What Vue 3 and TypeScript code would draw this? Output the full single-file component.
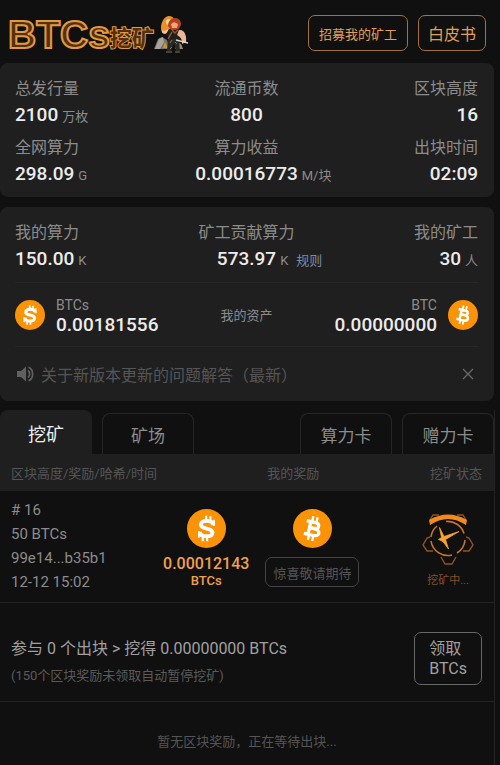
<script setup lang="ts">
import { ref } from 'vue'

interface Stat {
  label: string
  value: string
  unit?: string
  link?: string
}

const network: Stat[] = [
  { label: '总发行量', value: '2100', unit: '万枚' },
  { label: '流通币数', value: '800' },
  { label: '区块高度', value: '16' },
  { label: '全网算力', value: '298.09', unit: 'G' },
  { label: '算力收益', value: '0.00016773', unit: 'M/块' },
  { label: '出块时间', value: '02:09' },
]

const mine: Stat[] = [
  { label: '我的算力', value: '150.00', unit: 'K' },
  { label: '矿工贡献算力', value: '573.97', unit: 'K', link: '规则' },
  { label: '我的矿工', value: '30', unit: '人' },
]

const tabs: string[] = ['挖矿', '矿场', '算力卡', '赠力卡']
const active = ref(0)
const noticeOpen = ref(true)
</script>

<template>
  <svg class="defs" width="0" height="0" aria-hidden="true">
    <symbol id="coin-s" viewBox="0 0 40 40">
      <circle cx="20" cy="20" r="20" fill="#fb9309" />
      <g fill="none" stroke="#fff">
        <path d="M19.6 7v5M24 7.500v5M16.200 28v5M20.600 28v5" stroke-width="2.200" />
        <path d="M27 16.500c-.5-3-3-4.300-6.300-4.300-3.600 0-6.400 1.400-6.400 4 0 5.200 11.800 2.600 11.800 7.800 0 2.700-2.800 4-6.300 4-3.600 0-6.300-1.500-6.600-4.600" stroke-width="4" />
        <path d="M27.800 11v6.500M12.200 22.500v7" stroke-width="1.800" />
      </g>
    </symbol>
    <symbol id="coin-b" viewBox="0 0 40 40">
      <circle cx="20" cy="20" r="20" fill="#fb9309" />
      <g transform="rotate(13 20 20)" fill="none" stroke="#fff">
        <path d="M18 7.500v5M22.500 7.500v5M18 27.500v5M22.500 27.500v5" stroke-width="2.400" />
        <path d="M12.500 13.500h9c5.500 0 5.500 6 0 6h-4.500M17 19.800h5.500c6.500 0 6.500 7 0 7h-10M16.800 13v14" stroke-width="3.400" />
      </g>
    </symbol>
  </svg>

  <main class="page">
    <header class="top">
      <h1 class="logo">
        <span class="logo-en">BTCs</span><span class="logo-cn">挖矿</span>
        <svg class="miner" viewBox="0 0 36 40" aria-hidden="true">
          <path d="M0 34l4-10 4-2 5 3 3 9z" fill="#77746e" />
          <path d="M5 24l4-2 1 5-4 7H1z" fill="#a9a498" />
          <path d="M9 33l2-6 3 6z" fill="#c9962f" />
          <path d="M21 34l2-7 4 2 2 5z" fill="#a78c6c" />
          <path d="M7 13c0-7 4-12 8-12 5 0 6 4 4 8-2 5-6 8-9 8-2 0-3-2-3-4z" fill="#e8912a" />
          <path d="M8 14c0 3 4 2 6 0l1 3-4 2c-3 0-4-3-3-5z" fill="#f0c398" />
          <circle cx="15" cy="7" r="3" fill="#f8d79c" />
          <path d="M14 11c0-5 3-8 7-8s6 3 6 7l-3 5h-7z" fill="#b4431c" />
          <path d="M17 9l3-2 4 2-1 4h-5z" fill="#efa57c" />
          <path d="M15 14l-3 5 5 8 8-1 4-7-5-5-5 2z" fill="#20201d" />
          <path d="M18 15l3 3 3-3M14 24l4-7" fill="none" stroke="#8a5a32" stroke-width="1.500" />
          <path d="M25 15c5-1 8 5 7 12l-4 2c1-5-3-8-5-9z" fill="#eeb596" />
          <path d="M14 24h11l1 12h-4l-2-8-3 8h-4z" fill="#292a27" />
          <path d="M16 28l2-3M21 27l2 2M18 32l-2 2" stroke="#85764d" stroke-width="1" />
          <path d="M22 25l12 3" stroke="#d8d6cc" stroke-width="1.300" />
          <path d="M12 36h6v2h-6zM21 36h5v2h-5z" fill="#4a4039" />
        </svg>
      </h1>
      <nav class="actions">
        <button type="button" class="gold small">招募我的矿工</button>
        <button type="button" class="gold">白皮书</button>
      </nav>
    </header>

    <section class="card">
      <dl class="stats">
        <div v-for="s in network" :key="s.label" class="stat">
          <dt>{{ s.label }}</dt>
          <dd>{{ s.value }}<span v-if="s.unit" class="unit">{{ s.unit }}</span></dd>
        </div>
      </dl>
    </section>

    <section class="card second">
      <dl class="stats">
        <div v-for="s in mine" :key="s.label" class="stat">
          <dt>{{ s.label }}</dt>
          <dd>{{ s.value }}<span v-if="s.unit" class="unit">{{ s.unit }}<a v-if="s.link" href="#rules">{{ s.link }}</a></span></dd>
        </div>
      </dl>
      <div class="assets">
        <div class="asset">
          <svg class="coin"><use href="#coin-s" /></svg>
          <p><small>BTCs</small><b>0.00181556</b></p>
        </div>
        <span class="assets-title">我的资产</span>
        <div class="asset end">
          <p><small>BTC</small><b>0.00000000</b></p>
          <svg class="coin"><use href="#coin-b" /></svg>
        </div>
      </div>
      <div v-if="noticeOpen" class="notice">
        <svg class="speaker" viewBox="0 0 18 18" aria-hidden="true">
          <path d="M1 6h4l5-4.500v15L5 12H1z" fill="#606060" />
          <path d="M12 5.500c2.200 1.500 2.200 5.500 0 7M12.500 2.200c5.500 2.300 5.500 11.300 0 13.600" fill="none" stroke="#606060" stroke-width="1.700" />
        </svg>
        <a href="#notice">关于新版本更新的问题解答（最新）</a>
        <button type="button" class="close" aria-label="关闭" @click="noticeOpen = false">
          <svg viewBox="0 0 12 12"><path d="M1 1l10 10M11 1L1 11" stroke="#6a6a6a" stroke-width="1.200" /></svg>
        </button>
      </div>
    </section>

    <section class="board">
      <div class="tabs" role="tablist">
        <button
          v-for="(t, i) in tabs"
          :key="t"
          type="button"
          role="tab"
          class="tab"
          :class="{ active: i === active }"
          :aria-selected="i === active"
          @click="active = i"
        >{{ t }}</button>
      </div>

      <table class="blocks">
        <colgroup><col class="c1" /><col class="c2" /><col class="c3" /><col /></colgroup>
        <thead>
          <tr>
            <th colspan="2">区块高度/奖励/哈希/时间</th>
            <th>我的奖励</th>
            <th class="right">挖矿状态</th>
          </tr>
        </thead>
        <tbody>
          <tr>
            <td class="info"># 16<br />50 BTCs<br />99e14...b35b1<br />12-12 15:02</td>
            <td>
              <div class="reward">
                <svg class="coin big"><use href="#coin-s" /></svg>
                <b>0.00012143</b>
                <small>BTCs</small>
              </div>
            </td>
            <td>
              <div class="reward">
                <svg class="coin big"><use href="#coin-b" /></svg>
                <button type="button" class="soon">惊喜敬请期待</button>
              </div>
            </td>
            <td>
              <div class="status">
                <svg class="clock" viewBox="0 0 52 52" fill="none" aria-hidden="true">
                  <g stroke="#8f5222" stroke-width="1.400">
                    <path d="M8 24l-3 1-4 7 4 6h6M44 24l3 1 4 7-4 6h-6M19 44l4 7h7l4-7M8 7l3-5h6M44 7l-3-5h-6" />
                  </g>
                  <path d="M9 24a17 17 0 0 1 6-11M24 8.500a17 17 0 0 1 18 12M43 27a17 17 0 0 1-8 13M30 42A17 17 0 0 1 9 28" stroke="#c8742a" stroke-width="1.600" />
                  <path d="M7 7Q26-4 45 7l-1 5Q26 0 8 12z" fill="#f28a1c" />
                  <path d="M17.500 14.500l4.500 9 15-5-13.500 8 3 9.500-5.500-7.500-4.500-2 3-2z" fill="#fba52c" stroke="#fba52c" stroke-width=".8" />
                </svg>
                <span>挖矿中...</span>
              </div>
            </td>
          </tr>
        </tbody>
      </table>

      <div class="claim">
        <div class="claim-text">
          <p class="sum">参与 0 个出块 &gt; 挖得 0.00000000 BTCs</p>
          <p class="hint">(150个区块奖励未领取自动暂停挖矿)</p>
        </div>
        <button type="button" class="take">领取<br />BTCs</button>
      </div>

      <p class="empty">暂无区块奖励，正在等待出块...</p>
    </section>
  </main>
</template>

<style>
body {
  margin: 0;
  background: #101010;
}
</style>

<style scoped>
* {
  box-sizing: border-box;
}
.defs {
  position: absolute;
}
.page {
  display: flex;
  flex-direction: column;
  min-height: 100vh;
  padding-right: 6px;
  overflow: hidden;
  color: #8c8c8c;
  font-family: Roboto, 'Noto Sans CJK SC', sans-serif;
  font-size: 16px;
}
p,
dl,
dd,
h1 {
  margin: 0;
}
button {
  padding: 0;
  border: 0;
  background: none;
  color: inherit;
  font: inherit;
  cursor: pointer;
}
a {
  color: inherit;
  text-decoration: none;
}
b {
  font-weight: 500;
}
.top {
  display: flex;
  justify-content: space-between;
  align-items: flex-start;
  height: 63px;
  padding: 15px 8px 0 8px;
}
.logo {
  display: flex;
  align-items: flex-end;
  height: 40px;
  color: #54300f;
  font-family: 'Liberation Sans', 'Noto Sans CJK SC', sans-serif;
  font-weight: 700;
  -webkit-text-stroke: 2px #e09a42;
}
.logo-en {
  font-size: 39px;
  line-height: 40px;
}
.logo-cn {
  padding-bottom: 3px;
  font-size: 22px;
  line-height: 26px;
  paint-order: stroke fill;
}
.miner {
  width: 36px;
  height: 40px;
}
.actions {
  display: flex;
  gap: 10px;
}
.gold {
  height: 36px;
  padding: 0 9px;
  border: 1px solid #a3713f;
  border-radius: 7px;
  color: #e0a055;
}
.gold.small {
  padding: 0 10px;
  font-size: 13px;
}
.card {
  padding: 13px 16px 10px 15px;
  border-radius: 8px;
  background: #1f1f1f;
}
.second {
  margin-top: 10px;
  padding-bottom: 0;
}
.stats {
  display: grid;
  grid-template-columns: 1fr auto 1fr;
  row-gap: 7px;
}
.stat {
  line-height: 26px;
}
.stat:nth-child(3n + 2) {
  text-align: center;
}
.stat:nth-child(3n) {
  text-align: right;
}
dd,
.asset b {
  color: #ececec;
  font-size: 19px;
  font-weight: 500;
}
.unit {
  padding-left: 4px;
  color: #8c8c8c;
  font-size: 13px;
  font-weight: 400;
  line-height: 13px;
}
.stat:nth-child(3n + 2) .unit {
  display: inline-block;
  width: 0;
  white-space: nowrap;
  margin-right: -4px;
}
.unit a {
  margin-left: 8px;
  color: #7c8ba8;
}
.assets {
  display: flex;
  justify-content: space-between;
  align-items: center;
  height: 65px;
  margin-top: 10px;
  border: solid #272727;
  border-width: 1px 0;
}
.asset {
  display: flex;
  align-items: center;
  gap: 11px;
}
.asset small,
.asset b {
  display: block;
  line-height: 20px;
}
.asset small {
  font-size: 14px;
}
.end {
  text-align: right;
}
.coin {
  width: 30px;
  height: 30px;
}
.assets-title {
  font-size: 13px;
}
.notice {
  display: flex;
  align-items: center;
  height: 54px;
  color: #555;
}
.speaker {
  width: 18px;
  height: 18px;
  margin: 0 7px 0 1px;
}
.close {
  display: flex;
  margin: 0 4px 0 auto;
}
.close svg {
  width: 12px;
  height: 12px;
}
.board {
  flex: 1;
  margin-top: 9px;
  border-right: 1px solid #232323;
  margin-right: -1px;
}
.tabs {
  display: flex;
  align-items: flex-end;
  gap: 10px;
  height: 44px;
}
.tab {
  width: 92px;
  height: 41px;
  border: 1px solid #262626;
  border-bottom: 0;
  border-radius: 8px 8px 0 0;
  font-size: 17px;
}
.tab:nth-child(3) {
  margin-left: auto;
}
.tab.active {
  height: 44px;
  border-color: #1f1f1f;
  background: #1f1f1f;
  color: #eee;
  font-size: 18px;
}
.blocks {
  width: 100%;
  border-collapse: collapse;
  table-layout: fixed;
}
.c1 {
  width: 30%;
}
.c2 {
  width: 23.5%;
}
.c3 {
  width: 19.5%;
}
th {
  height: 37px;
  padding: 0 0 0 3px;
  background: #1f1f1f;
  color: #555;
  font-size: 13px;
  font-weight: 400;
  text-align: left;
}
th:first-child {
  padding-left: 11px;
}
th.right {
  padding-right: 12px;
  text-align: right;
}
td {
  height: 111px;
  padding: 0;
  border-bottom: 1px solid #232323;
}
.info {
  padding-left: 11px;
  font-size: 15px;
  line-height: 24px;
}
.reward {
  display: flex;
  flex-direction: column;
  align-items: center;
  padding-top: 4px;
  color: #f0a04b;
}
.reward b {
  margin-top: 6px;
  font-size: 16px;
  line-height: 20px;
}
.reward small {
  font-size: 13px;
  font-weight: 500;
  line-height: 14px;
}
.big {
  width: 39px;
  height: 39px;
}
.soon {
  height: 30px;
  margin-top: 9px;
  padding: 0 7px;
  border: 1px solid #444;
  border-radius: 7px;
  color: #555;
  font-size: 13px;
  white-space: nowrap;
}
.status {
  display: flex;
  flex-direction: column;
  align-items: center;
  gap: 8px;
  width: 68px;
  margin: 10px 12px 0 auto;
  color: #85512a;
  font-size: 11px;
  line-height: 16px;
}
.clock {
  width: 52px;
  height: 52px;
}
.claim {
  display: flex;
  justify-content: space-between;
  align-items: center;
  height: 99px;
  padding: 14px 12px 0 11px;
  border-bottom: 1px solid #232323;
}
.claim-text {
  padding-top: 6px;
}
.sum {
  color: #a0a0a0;
  line-height: 28px;
}
.hint {
  color: #5a5a5a;
  font-size: 13px;
  line-height: 26px;
}
.take {
  height: 53px;
  padding: 0 14px;
  border: 1px solid #666;
  border-radius: 7px;
  color: #a0a0a0;
  line-height: 20px;
  text-align: left;
}
.empty {
  padding: 28px 0 12px;
  color: #555;
  font-size: 13px;
  line-height: 24px;
  text-align: center;
}
</style>
